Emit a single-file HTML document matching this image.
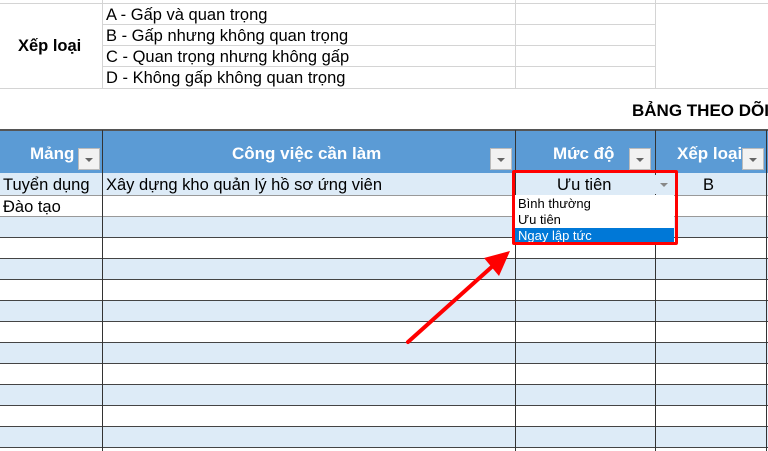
<!DOCTYPE html>
<html><head><meta charset="utf-8"><style>
body{margin:0;width:768px;height:451px;overflow:hidden;background:#fff;position:relative;font-family:"Liberation Sans",Arial,sans-serif;}
div{position:absolute;box-sizing:border-box;}
.t{font-size:16.5px;color:#000;white-space:nowrap;}
.h{color:#fff;font-weight:bold;font-size:17px;white-space:nowrap;}
.dd{width:22px;height:22px;background:#f2f2f2;border:1px solid #bbb;}
.dd:after{content:"";position:absolute;left:6px;top:9px;border-left:4px solid transparent;border-right:4px solid transparent;border-top:4px solid #666;}
</style></head><body>
<div style="left:0;top:3px;width:768px;height:1px;background:#d4d4d4"></div>
<div style="left:102px;top:0;width:1px;height:89px;background:#d4d4d4"></div>
<div style="left:515px;top:0;width:1px;height:89px;background:#d4d4d4"></div>
<div style="left:655px;top:0;width:1px;height:89px;background:#d4d4d4"></div>
<div style="left:102px;top:24px;width:553px;height:1px;background:#d4d4d4"></div>
<div style="left:102px;top:45px;width:553px;height:1px;background:#d4d4d4"></div>
<div style="left:102px;top:66px;width:553px;height:1px;background:#d4d4d4"></div>
<div style="left:0;top:88px;width:768px;height:1px;background:#d4d4d4"></div>
<div class="t" style="left:18px;top:37px;font-weight:bold;">Xếp loại</div>
<div class="t" style="left:106px;top:6px;">A - Gấp và quan trọng</div>
<div class="t" style="left:106px;top:27px;">B - Gấp nhưng không quan trọng</div>
<div class="t" style="left:106px;top:48px;">C - Quan trọng nhưng không gấp</div>
<div class="t" style="left:106px;top:69px;">D - Không gấp không quan trọng</div>
<div class="t" style="left:632px;top:101px;font-weight:bold;font-size:17px;">BẢNG THEO DÕI</div>
<div style="left:0;top:129px;width:768px;height:44px;background:#5b9bd5;border-top:2px solid #555"></div>
<div class="h" style="left:30px;top:144px;">Mảng</div><div class="dd" style="left:78px;top:148px"></div>
<div class="h" style="left:232px;top:144px;">Công việc cần làm</div><div class="dd" style="left:490px;top:148px"></div>
<div class="h" style="left:553px;top:144px;">Mức độ</div><div class="dd" style="left:629px;top:148px"></div>
<div class="h" style="left:677px;top:144px;">Xếp loại</div><div class="dd" style="left:742px;top:148px"></div>
<div style="left:0;top:173px;width:768px;height:22px;background:#ddebf7"></div>
<div style="left:0;top:216px;width:768px;height:21px;background:#ddebf7"></div>
<div style="left:0;top:258px;width:768px;height:21px;background:#ddebf7"></div>
<div style="left:0;top:300px;width:768px;height:21px;background:#ddebf7"></div>
<div style="left:0;top:342px;width:768px;height:21px;background:#ddebf7"></div>
<div style="left:0;top:384px;width:768px;height:21px;background:#ddebf7"></div>
<div style="left:0;top:426px;width:768px;height:21px;background:#ddebf7"></div>
<div style="left:0;top:195px;width:768px;height:1px;background:#999"></div>
<div style="left:0;top:216px;width:768px;height:1px;background:#999"></div>
<div style="left:0;top:237px;width:768px;height:1px;background:#444"></div>
<div style="left:0;top:258px;width:768px;height:1px;background:#444"></div>
<div style="left:0;top:279px;width:768px;height:1px;background:#444"></div>
<div style="left:0;top:300px;width:768px;height:1px;background:#444"></div>
<div style="left:0;top:321px;width:768px;height:1px;background:#444"></div>
<div style="left:0;top:342px;width:768px;height:1px;background:#444"></div>
<div style="left:0;top:363px;width:768px;height:1px;background:#444"></div>
<div style="left:0;top:384px;width:768px;height:1px;background:#444"></div>
<div style="left:0;top:405px;width:768px;height:1px;background:#444"></div>
<div style="left:0;top:426px;width:768px;height:1px;background:#444"></div>
<div style="left:0;top:447px;width:768px;height:1px;background:#444"></div>
<div style="left:102px;top:130px;width:1px;height:321px;background:#333"></div>
<div style="left:515px;top:130px;width:1px;height:321px;background:#333"></div>
<div style="left:655px;top:130px;width:1px;height:321px;background:#333"></div>
<div style="left:766px;top:130px;width:1px;height:321px;background:#333"></div>
<div class="t" style="left:3px;top:176px;">Tuyển dụng</div>
<div class="t" style="left:106px;top:176px;">Xây dựng kho quản lý hồ sơ ứng viên</div>
<div class="t" style="left:3px;top:198px;">Đào tạo</div>
<div class="t" style="left:557px;top:176px;">Ưu tiên</div>
<div class="t" style="left:703px;top:176px;">B</div>
<div style="left:655px;top:175px;width:18px;height:19px;background:#ddebf7"></div>
<div style="left:660px;top:183px;border-left:4px solid transparent;border-right:4px solid transparent;border-top:4px solid #888;"></div>
<div style="left:515px;top:195px;width:159px;height:48px;background:#fff;"></div>
<div style="left:515px;top:228px;width:159px;height:15px;background:#0078d7;"></div>
<div style="left:518px;top:196px;font-size:13px;">Bình thường</div>
<div style="left:518px;top:212px;font-size:13px;">Ưu tiên</div>
<div style="left:518px;top:228px;font-size:13px;color:#fff;">Ngay lập tức</div>
<div style="left:512px;top:170px;width:166px;height:75px;border:3px solid #ff0000;border-radius:2px;"></div>
<svg style="position:absolute;left:0;top:0" width="768" height="451"><line x1="408" y1="342" x2="495" y2="264" stroke="#f00" stroke-width="4" stroke-linecap="round"/><polygon points="510,251 484,258 499,276" fill="#f00"/></svg>
</body></html>
